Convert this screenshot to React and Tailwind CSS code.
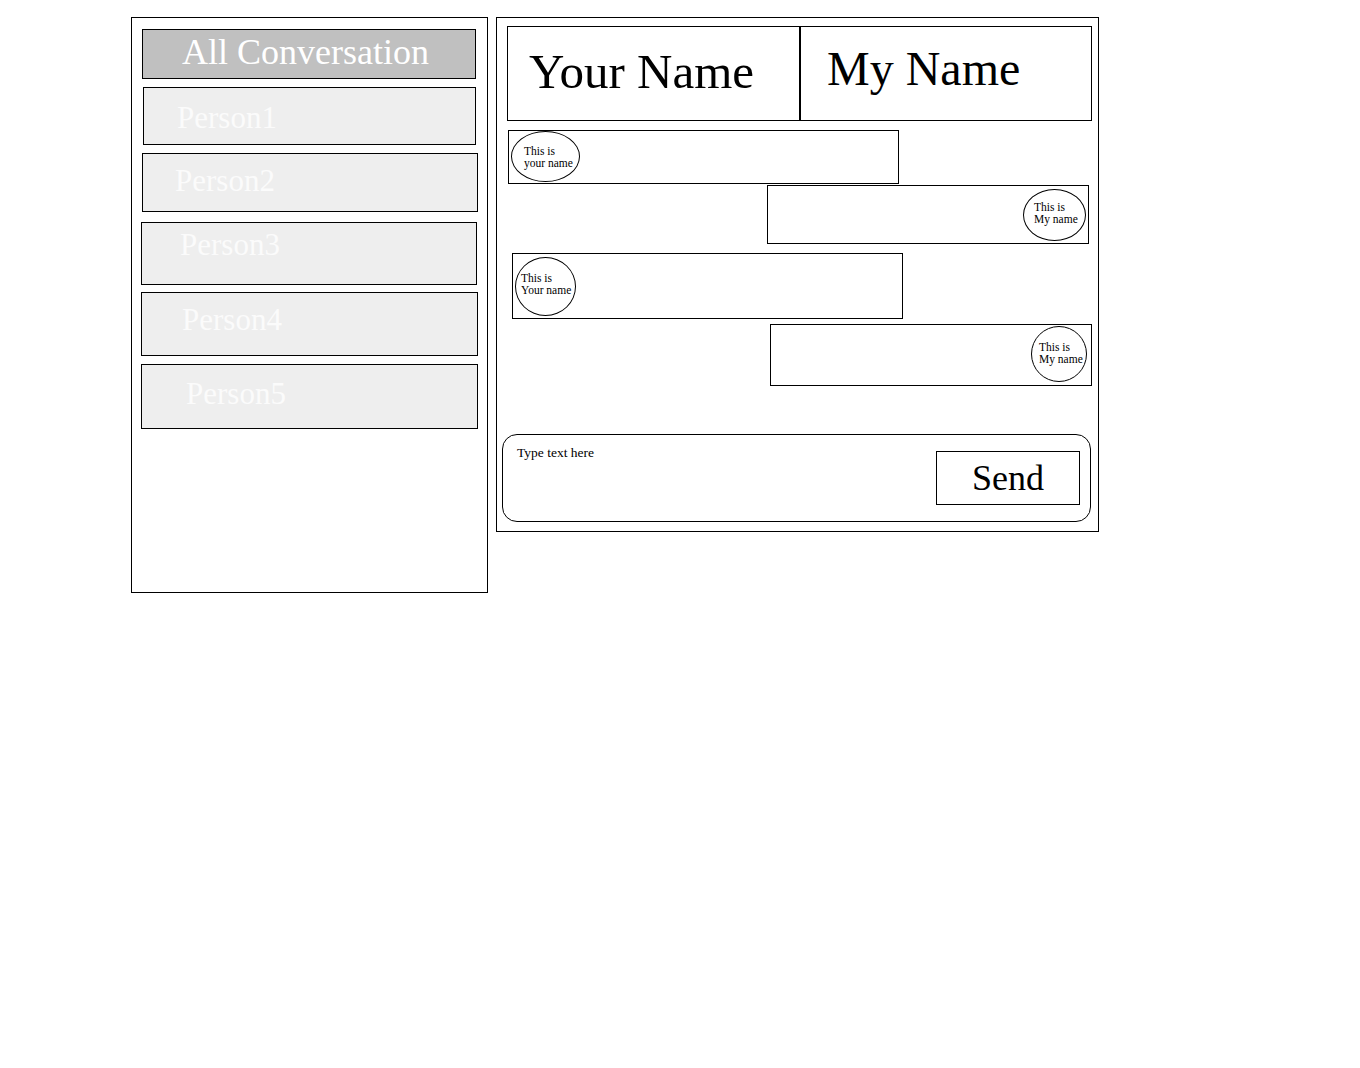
import React from "react";

const people = [
    { name: "Person1", box: "ml-[11px] mt-[8px] w-[333px] h-[58px] pt-[14px] pl-[33px]" },
    { name: "Person2", box: "ml-[10px] mt-[8px] w-[336px] h-[59px] pt-[11px] pl-[32px]" },
    { name: "Person3", box: "ml-[9px] mt-[10px] w-[336px] h-[63px] pt-[6px] pl-[38px]" },
    { name: "Person4", box: "ml-[9px] mt-[7px] w-[337px] h-[64px] pt-[11px] pl-[40px]" },
    { name: "Person5", box: "ml-[9px] mt-[8px] w-[337px] h-[65px] pt-[13px] pl-[44px]" },
];

const Avatar = ({ className, lines }) => (
    <div className={`shrink-0 rounded-[50%] border border-black ${className}`}>
        <div className="text-[11.5px] leading-[12px] whitespace-nowrap text-black">
            {lines.map((l) => (
                <div key={l}>{l}</div>
            ))}
        </div>
    </div>
);

const App = () => {
    return (
        <div className="min-h-screen bg-white flex items-start gap-[8px] pl-[131px] pt-[17px] font-['Liberation_Serif',serif]">
            {/* Conversation list */}
            <div className="w-[357px] h-[576px] border border-black flex flex-col">
                <div className="ml-[10px] mt-[11px] w-[334px] h-[50px] border border-black bg-[#c0c0c0] pt-[4px] pl-[39px]">
                    <span className="block text-[36px] leading-none text-white whitespace-nowrap">All Conversation</span>
                </div>
                {people.map((p) => (
                    <div key={p.name} className={`border border-black bg-[#eeeeee] ${p.box}`}>
                        <span className="block text-[31px] leading-none text-[#fbfbfb]">{p.name}</span>
                    </div>
                ))}
            </div>

            {/* Chat panel */}
            <div className="w-[603px] h-[515px] border border-black flex flex-col">
                {/* Header */}
                <div className="ml-[10px] mt-[8px] w-[585px] h-[95px] border border-black flex">
                    <div className="w-[291px] pt-[20px] pl-[21px]">
                        <span className="block text-[49px] leading-none text-black whitespace-nowrap">Your Name</span>
                    </div>
                    <div className="flex-1 border-l-2 border-black pt-[18px] pl-[26px]">
                        <span className="block text-[48px] leading-none text-black whitespace-nowrap">My Name</span>
                    </div>
                </div>

                {/* Messages */}
                <div className="ml-[11px] mt-[9px] w-[391px] h-[54px] border border-black flex items-start">
                    <Avatar
                        className="ml-[2px] w-[69px] h-[51px] flex flex-col justify-center pl-[12px]"
                        lines={["This is", "your name"]}
                    />
                </div>
                <div className="ml-[270px] mt-[1px] w-[322px] h-[59px] border border-black flex justify-end items-start">
                    <Avatar
                        className="mr-[2px] mt-[3px] w-[63px] h-[52px] pt-[11px] pl-[10px]"
                        lines={["This is", "My name"]}
                    />
                </div>
                <div className="ml-[15px] mt-[9px] w-[391px] h-[66px] border border-black flex items-start">
                    <Avatar
                        className="ml-[2px] mt-[3px] w-[61px] h-[59px] pt-[14px] pl-[5px]"
                        lines={["This is", "Your name"]}
                    />
                </div>
                <div className="ml-[273px] mt-[5px] w-[322px] h-[62px] border border-black flex justify-end items-start">
                    <Avatar
                        className="mr-[4px] mt-[1px] w-[56px] h-[56px] pt-[14px] pl-[7px]"
                        lines={["This is", "My name"]}
                    />
                </div>

                {/* Composer */}
                <div className="ml-[5px] mt-[48px] w-[589px] h-[88px] border border-black rounded-[15px] flex justify-between items-start">
                    <span className="block pt-[11px] pl-[14px] text-[13.5px] leading-none text-black">Type text here</span>
                    <button className="mt-[16px] mr-[10px] w-[144px] h-[54px] border border-black bg-white flex items-center justify-center">
                        <span className="text-[36px] leading-none text-black">Send</span>
                    </button>
                </div>
            </div>
        </div>
    );
};

export default App;
